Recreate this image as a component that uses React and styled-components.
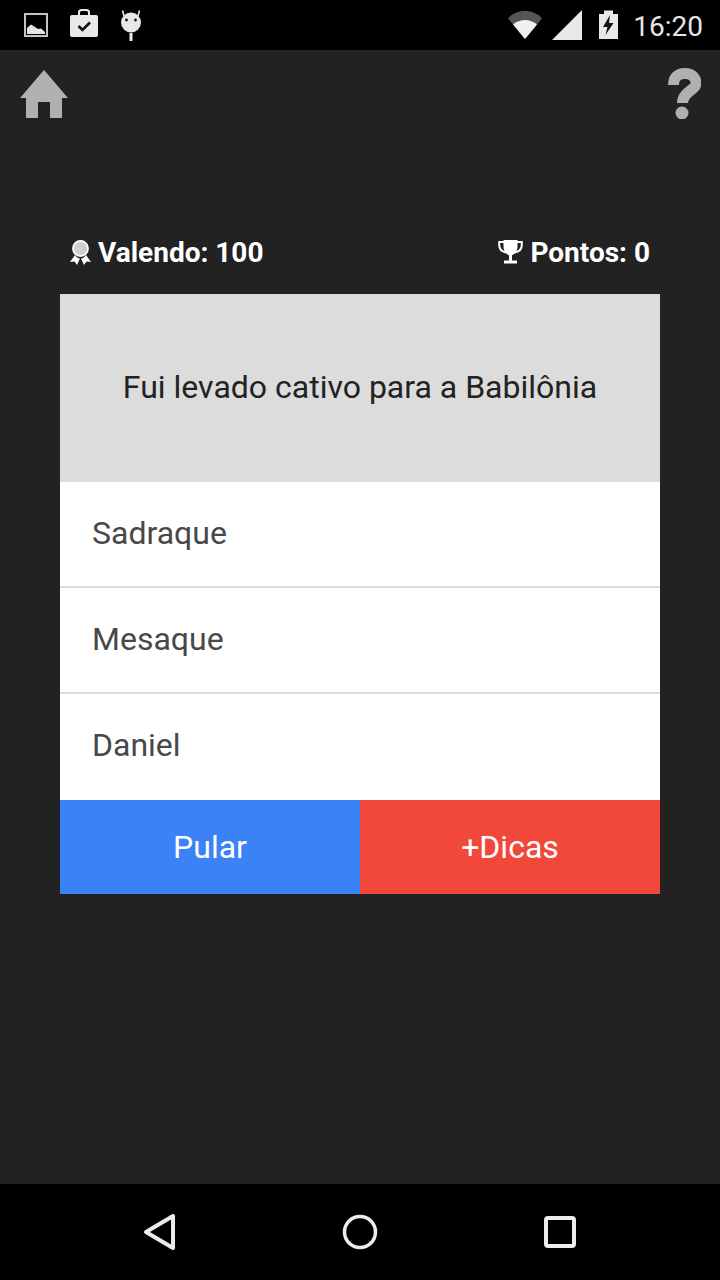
import styled, { createGlobalStyle } from 'styled-components';

const GlobalStyle = createGlobalStyle`
  html, body, #root {
    margin: 0;
    padding: 0;
    height: 100%;
  }
  body {
    background: #222222;
    font-family: Roboto, "Liberation Sans", sans-serif;
  }
`;

const Screen = styled.div`
  width: 720px;
  height: 1280px;
  display: flex;
  flex-direction: column;
  overflow: hidden;
  background: #222222;
`;

const StatusBar = styled.div`
  height: 50px;
  flex: none;
  background: #000;
  display: flex;
  align-items: flex-start;
  justify-content: space-between;
`;

const StatusGroup = styled.div`
  display: flex;
  align-items: flex-start;
  height: 50px;
  padding: ${(p) => (p.$right ? '0 17px 0 0' : '0 0 0 24px')};
  gap: ${(p) => (p.$right ? '0' : '22px')};
`;

const StatusIcon = styled.svg`
  display: block;
  flex: none;
  margin-left: ${(p) => p.$ml || 0}px;
`;

const Clock = styled.span`
  margin-left: 15px;
  font-size: 28px;
  line-height: 53px;
  color: #e6e6e6;
`;

const TopBar = styled.div`
  height: 69px;
  flex: none;
  box-sizing: border-box;
  padding: 18px 19px 0 20px;
  display: flex;
  justify-content: space-between;
  align-items: flex-start;
`;

const TopIcon = styled.svg`
  display: block;
`;

const Main = styled.div`
  flex: 1;
  display: flex;
  flex-direction: column;
  align-items: center;
`;

const ScoreRow = styled.div`
  width: 580px;
  height: 34px;
  margin: 116px 0 25px;
  display: flex;
  justify-content: space-between;
  align-items: center;
`;

const Score = styled.div`
  display: flex;
  align-items: center;
  gap: 7px;
  font-size: 28px;
  font-weight: 700;
  color: #fff;
`;

const Card = styled.div`
  width: 600px;
`;

const Question = styled.div`
  height: 188px;
  box-sizing: border-box;
  padding-bottom: 2px;
  background: #dcdcdc;
  display: flex;
  align-items: center;
  justify-content: center;
  font-size: 32px;
  color: #222;
`;

const Option = styled.div`
  height: 106px;
  box-sizing: border-box;
  padding: 0 0 ${(p) => (p.$last ? '4px' : '2px')} 32px;
  display: flex;
  align-items: center;
  background: #fff;
  font-size: 32px;
  color: #484848;
  border-bottom: ${(p) => (p.$last ? 'none' : '2px solid #dddddd')};
`;

const Actions = styled.div`
  display: grid;
  grid-template-columns: 1fr 1fr;
  height: 94px;
`;

const ActionButton = styled.button`
  border: none;
  padding: 0;
  font-family: inherit;
  font-size: 32px;
  color: #fff;
  background: ${(p) => p.$bg};
`;

const NavBar = styled.div`
  height: 96px;
  flex: none;
  background: #000;
  display: flex;
  align-items: center;
  justify-content: center;
  gap: 165px;
`;

const NavIcon = styled.svg`
  display: block;
`;

export default function App() {
  return (
    <Screen>
      <GlobalStyle />
      <StatusBar>
        <StatusGroup>
          <StatusIcon width="24" height="50" viewBox="24 0 24 50">
            <rect x="25" y="14" width="22" height="22" fill="none" stroke="#c4c4c4" strokeWidth="2" />
            <path d="M27 34V28L31 24.500L35 27L38 29L41 28.500L45 32V34Z" fill="#e4e4e4" />
          </StatusIcon>
          <StatusIcon width="28" height="50" viewBox="70 0 28 50">
            <path d="M79 15V12.500C79 11 80 10 81.500 10H86.500C88 10 89 11 89 12.500V15" fill="none" stroke="#e8e8e8" strokeWidth="2" />
            <rect x="70" y="15" width="28" height="22" rx="2" fill="#e8e8e8" />
            <path d="M78.500 26L82.500 30L90 22.500" fill="none" stroke="#111" strokeWidth="2.600" />
          </StatusIcon>
          <StatusIcon width="22" height="50" viewBox="121 0 22 50">
            <circle cx="132" cy="22.500" r="10" fill="#e8e8e8" />
            <path d="M125 16L123.500 10.500M139 16L140.500 10.500" stroke="#e8e8e8" strokeWidth="1.600" />
            <circle cx="127.500" cy="20" r="1.400" fill="#111" />
            <circle cx="136.500" cy="20" r="1.400" fill="#111" />
            <rect x="130.500" y="33" width="3" height="8" fill="#e8e8e8" />
          </StatusIcon>
        </StatusGroup>
        <StatusGroup $right>
          <StatusIcon width="34" height="50" viewBox="509 0 34 50">
            <path d="M509 18.500C513 13.500 519 11 526 11C533 11 539 13.500 543 18.500L526 39Z" fill="#555" />
            <path d="M514 24.500C517.500 21.500 521.500 20 526 20C530.500 20 534.500 21.500 538 24.500L526 39Z" fill="#f0f0f0" />
          </StatusIcon>
          <StatusIcon width="30" height="50" viewBox="553 0 30 50" $ml={10}>
            <path d="M553 40L583 10V40Z" fill="#e8e8e8" />
          </StatusIcon>
          <StatusIcon width="19" height="50" viewBox="600 0 19 50" $ml={17}>
            <path d="M600 14H605V10.500H614V14H619V39H600Z" fill="#e8e8e8" />
            <path d="M611 15L604 27H608.500L606.500 35L614.500 23H610Z" fill="#111" />
          </StatusIcon>
          <Clock>16:20</Clock>
        </StatusGroup>
      </StatusBar>

      <TopBar>
        <TopIcon width="48" height="51" viewBox="20 68 48 51">
          <path d="M44 70L68 98H62V118H50V102H38V118H26V98H20Z" fill="#b0b0b0" />
        </TopIcon>
        <TopIcon width="33" height="51" viewBox="668 68 33 51">
          <path d="M673.500 85C673.500 77 678 73.500 685 73.500C691.500 73.500 696 77.500 696 83C696 90.500 682.500 91.500 682.500 103" fill="none" stroke="#b0b0b0" strokeWidth="11" />
          <circle cx="682" cy="113" r="6.500" fill="#b0b0b0" />
        </TopIcon>
      </TopBar>

      <Main>
        <ScoreRow>
          <Score>
            <svg width="21" height="25" viewBox="0 0 21 25">
              <circle cx="10.500" cy="8.500" r="7.500" fill="#cfcfcf" stroke="#fff" strokeWidth="1.800" />
              <path d="M5 15L0 22L4.500 21.500L7 25L10 18.500C8 18.500 6.500 17 5 15Z" fill="#fff" />
              <path d="M16 15L21 22L16.500 21.500L14 25L11 18.500C13 18.500 14.500 17 16 15Z" fill="#fff" />
            </svg>
            Valendo: 100
          </Score>
          <Score>
            <svg width="25" height="24" viewBox="0 0 25 24">
              <path d="M5.500 0H19.500V6C19.500 11.500 16.500 15 12.500 15.500C8.500 15 5.500 11.500 5.500 6Z" fill="#fff" />
              <path d="M6 2H1.200V5C1.200 9 3.500 11.500 8 12.500M19 2H23.800V5C23.800 9 21.500 11.500 17 12.500" fill="none" stroke="#fff" strokeWidth="2" />
              <rect x="11" y="15" width="3" height="6" fill="#fff" />
              <rect x="6" y="20.500" width="13" height="3" fill="#fff" />
            </svg>
            Pontos: 0
          </Score>
        </ScoreRow>

        <Card>
          <Question>Fui levado cativo para a Babilônia</Question>
          <Option>Sadraque</Option>
          <Option>Mesaque</Option>
          <Option $last>Daniel</Option>
          <Actions>
            <ActionButton $bg="#3b82f6">Pular</ActionButton>
            <ActionButton $bg="#f2483b">+Dicas</ActionButton>
          </Actions>
        </Card>
      </Main>

      <NavBar>
        <NavIcon width="34" height="40" viewBox="0 0 34 40">
          <path d="M3 20L30 4V36Z" fill="none" stroke="#ececec" strokeWidth="4" strokeLinejoin="round" />
        </NavIcon>
        <NavIcon width="36" height="36" viewBox="0 0 36 36">
          <circle cx="18" cy="18" r="15.500" fill="none" stroke="#ececec" strokeWidth="3.500" />
        </NavIcon>
        <NavIcon width="34" height="34" viewBox="0 0 34 34">
          <rect x="3" y="3" width="28" height="28" rx="2" fill="none" stroke="#ececec" strokeWidth="4" />
        </NavIcon>
      </NavBar>
    </Screen>
  );
}
